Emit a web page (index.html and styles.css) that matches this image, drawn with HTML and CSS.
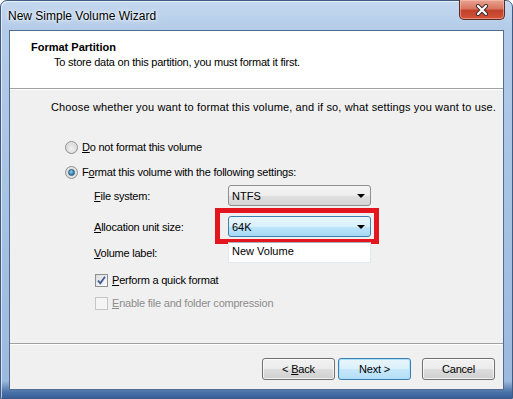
FILE: index.html
```html
<!DOCTYPE html>
<html lang="en">
<head>
    <meta charset="UTF-8">
    <title>New Simple Volume Wizard</title>
    <link rel="stylesheet" href="styles.css">
</head>
<body>

    <div class="window">
        <div class="titlebar">
            <span class="title">New Simple Volume Wizard</span>
            <button class="close-btn">
                <svg width="14" height="12" viewBox="0 0 14 12">
                    <path d="M3 2 L11 10 M11 2 L3 10" stroke="#3a2a28" stroke-width="4" stroke-linecap="round"/>
                    <path d="M3 2 L11 10 M11 2 L3 10" stroke="#ffffff" stroke-width="2.2" stroke-linecap="round"/>
                </svg>
            </button>
        </div>

        <div class="client">
            <div class="header">
                <div class="header-title">Format Partition</div>
                <div class="header-sub">To store data on this partition, you must format it first.</div>
            </div>

            <div class="content">
                <div class="intro">Choose whether you want to format this volume, and if so, what settings you want to use.</div>

                <div class="options">
                    <label class="radio-row">
                        <span class="radio"></span>
                        <span><u>D</u>o not format this volume</span>
                    </label>
                    <label class="radio-row second">
                        <span class="radio checked"></span>
                        <span>F<u>o</u>rmat this volume with the following settings:</span>
                    </label>

                    <div class="settings">
                        <div class="field-row">
                            <span class="field-label"><u>F</u>ile system:</span>
                            <div class="combo">
                                <span>NTFS</span>
                                <span class="arrow"></span>
                            </div>
                        </div>
                        <div class="field-row alloc">
                            <span class="field-label"><u>A</u>llocation unit size:</span>
                            <div class="combo focused">
                                <span>64K</span>
                                <span class="arrow"></span>
                            </div>
                            <div class="highlight-box"></div>
                        </div>
                        <div class="field-row volume">
                            <span class="field-label"><u>V</u>olume label:</span>
                            <div class="textbox">New Volume</div>
                        </div>

                        <label class="check-row">
                            <span class="checkbox">
                                <svg width="11" height="11" viewBox="0 0 11 11">
                                    <path d="M2 5.5 L4.3 8.3 L9 1.8" fill="none" stroke="#3d5a9a" stroke-width="1.8"/>
                                </svg>
                            </span>
                            <span><u>P</u>erform a quick format</span>
                        </label>
                        <label class="check-row disabled">
                            <span class="checkbox"></span>
                            <span><u>E</u>nable file and folder compression</span>
                        </label>
                    </div>
                </div>
            </div>

            <div class="footer">
                <button class="btn">&lt; <u>B</u>ack</button>
                <button class="btn default">Next &gt;</button>
                <button class="btn cancel">Cancel</button>
            </div>
        </div>
    </div>

</body>
</html>
```

FILE: styles.css
```css
body {
    margin: 0;
    background-color: #ffffff;
    font-family: "Liberation Sans", Arial, sans-serif;
}

.window {
    width: 513px;
    height: 399px;
    box-sizing: border-box;
    display: flex;
    flex-direction: column;
    padding: 0 8px 8px 8px;
    border: 1px solid #3f5b82;
    border-radius: 7px 7px 0 0;
    background: linear-gradient(to bottom, #c4d8ef 0px, #b3cbe8 30px, #a8c2e3 200px, #9db9de 380px, #4b72a8 391px, #2f5a98 399px);
    box-shadow: inset 1px 1px 0 rgba(255, 255, 255, 0.6);
}

.titlebar {
    height: 29px;
    display: flex;
    justify-content: space-between;
    align-items: flex-start;
}

.title {
    font-size: 12px;
    color: #000;
    margin-top: 8px;
    margin-left: -1px;
    text-shadow: 0 0 6px #ffffff, 0 0 3px #ffffff;
}

.close-btn {
    width: 46px;
    height: 20px;
    margin-top: -1px;
    margin-right: -1px;
    padding: 0;
    border: 1px solid #5a2a24;
    border-top: none;
    border-radius: 0 0 5px 5px;
    background: linear-gradient(to bottom, #e8a493 0%, #d8755f 45%, #c2412b 55%, #d3523a 100%);
    box-shadow: inset 0 0 0 1px rgba(255, 200, 190, 0.5);
    display: flex;
    justify-content: center;
    align-items: center;
}

.client {
    flex: 1;
    display: flex;
    flex-direction: column;
    border: 1px solid #4f6c92;
    background-color: #f0f0f0;
    font-size: 11px;
    letter-spacing: -0.22px;
    color: #000;
}

.header {
    height: 58px;
    box-sizing: border-box;
    background-color: #ffffff;
    border-bottom: 1px solid #a0a0a0;
    padding: 9px 0 0 21px;
    line-height: 14px;
}

.header-title {
    font-weight: bold;
    letter-spacing: 0;
}

.header-sub {
    margin-top: 1px;
    padding-left: 23px;
}

.content {
    flex: 1;
    border-top: 1px solid #ffffff;
    padding: 10px 0 0 41px;
    line-height: 14px;
}

.intro {
    letter-spacing: 0.13px;
    white-space: nowrap;
}

.options {
    margin-top: 26px;
    padding-left: 14px;
}

.radio-row {
    display: flex;
    align-items: center;
    gap: 4px;
    height: 14px;
}

.radio-row.second {
    margin-top: 11px;
}

.radio {
    width: 13px;
    height: 13px;
    box-sizing: border-box;
    border-radius: 50%;
    border: 1px solid #8e8f8f;
    background: radial-gradient(circle at 50% 60%, #f4f4f4 0%, #dcdcdc 55%, #f6f6f6 100%);
    display: flex;
    justify-content: center;
    align-items: center;
}

.radio.checked::after {
    content: "";
    width: 5px;
    height: 5px;
    border-radius: 50%;
    background: radial-gradient(circle at 40% 35%, #8ad0f4 0%, #1f6ba0 80%);
    border: 1px solid #2c5a80;
}

.settings {
    margin-top: 6px;
    padding-left: 29px;
}

.field-row {
    display: flex;
    align-items: center;
    position: relative;
}

.field-row.alloc {
    margin-top: 10px;
}

.field-row.volume {
    margin-top: 5px;
}

.field-label {
    width: 134px;
}

.combo {
    width: 143px;
    height: 21px;
    box-sizing: border-box;
    border: 1px solid #8f8f8f;
    border-radius: 3px;
    background: linear-gradient(to bottom, #f5f5f5 0%, #ededed 50%, #e0e0e0 51%, #d4d4d4 100%);
    display: flex;
    align-items: center;
    justify-content: space-between;
    padding: 0 5px 0 3px;
    letter-spacing: 0;
}

.combo.focused {
    border-color: #3c7fb1;
    background: linear-gradient(to bottom, #eaf6fd 0%, #d9f0fc 50%, #bee6fd 51%, #a7d9f5 100%);
}

.arrow {
    width: 0;
    height: 0;
    border-left: 4px solid transparent;
    border-right: 4px solid transparent;
    border-top: 4px solid #000;
}

.highlight-box {
    position: absolute;
    left: 121px;
    top: -8px;
    width: 164px;
    height: 36px;
    box-sizing: border-box;
    border: 5px solid #e3151f;
}

.textbox {
    width: 143px;
    height: 21px;
    box-sizing: border-box;
    background-color: #ffffff;
    border: 1px solid #e3e9ef;
    border-top-color: #abadb3;
    padding: 1px 3px 0 3px;
    line-height: 14px;
    letter-spacing: 0;
}

.check-row {
    display: flex;
    align-items: center;
    gap: 4px;
    height: 14px;
    margin-top: 10px;
    margin-left: 1px;
}

.check-row.disabled {
    margin-top: 9px;
    color: #8d8d8d;
}

.checkbox {
    width: 13px;
    height: 13px;
    box-sizing: border-box;
    border: 1px solid #8e8f8f;
    background: linear-gradient(135deg, #dcdcdc 0%, #fbfbfb 100%);
    display: flex;
    justify-content: center;
    align-items: center;
}

.check-row.disabled .checkbox {
    border-color: #c6c6c6;
    background: #f4f4f4;
}

.footer {
    height: 46px;
    box-sizing: border-box;
    border-top: 1px solid #a0a0a0;
    box-shadow: inset 0 1px 0 #ffffff;
    display: flex;
    align-items: flex-start;
    padding: 14px 0 0 252px;
}

.btn {
    width: 73px;
    height: 22px;
    padding: 0;
    border: 1px solid #707070;
    border-radius: 3px;
    background: linear-gradient(to bottom, #f2f2f2 0%, #ebebeb 50%, #dddddd 51%, #cfcfcf 100%);
    box-shadow: inset 0 0 0 1px rgba(255, 255, 255, 0.7);
    font-family: "Liberation Sans", Arial, sans-serif;
    font-size: 11px;
    letter-spacing: -0.2px;
    color: #000;
}

.btn.default {
    margin-left: 3px;
    border-color: #3c7fb1;
    background: linear-gradient(to bottom, #eaf6fd 0%, #d9f0fc 50%, #c6e7fb 51%, #b4def7 100%);
    box-shadow: inset 0 0 0 1px #a9e1fb;
}

.btn.cancel {
    margin-left: 11px;
}
```
